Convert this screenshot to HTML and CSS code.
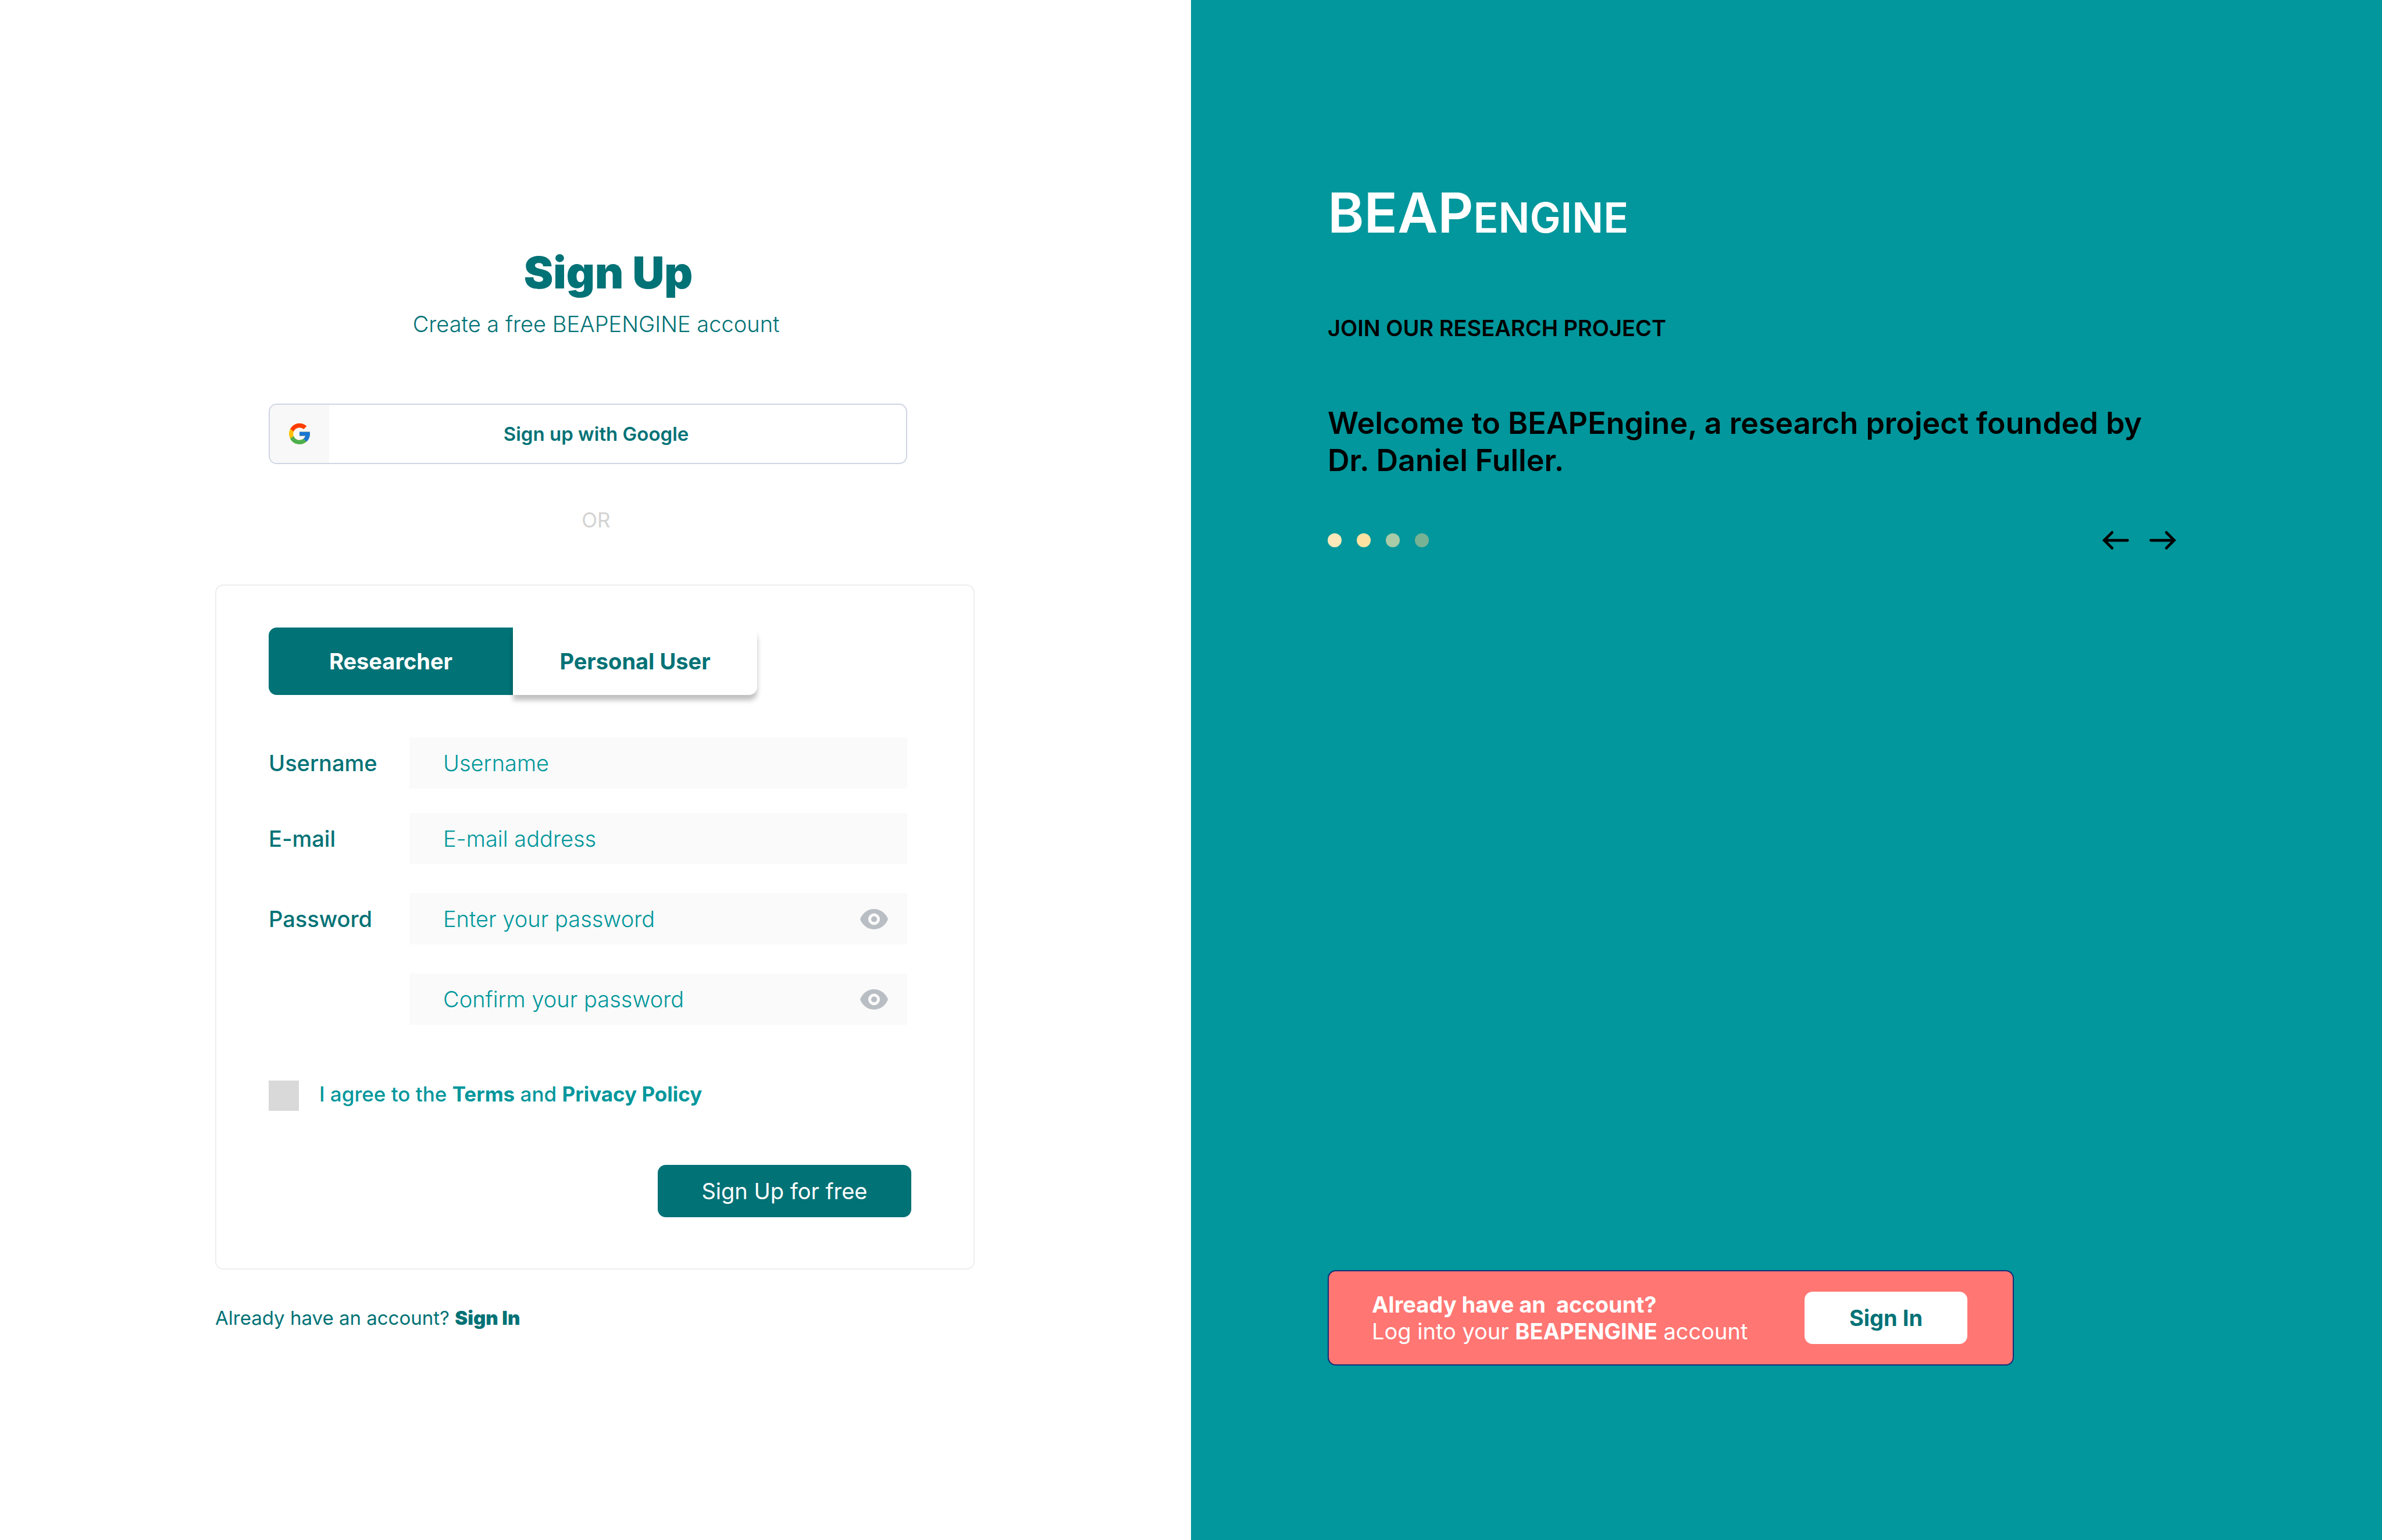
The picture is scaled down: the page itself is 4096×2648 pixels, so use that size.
FILE: index.html
```html
<!DOCTYPE html>
<html lang="en">
<head>
<meta charset="utf-8">
<title>Sign Up - BEAPENGINE</title>
<link rel="stylesheet" href="styles.css">
</head>
<body>
<div class="page">
  <main class="signup">
    <header class="intro">
      <h1 class="title">Sign Up</h1>
      <p class="subtitle">Create a free BEAPENGINE account</p>
    </header>
    <button type="button" class="google">
      <span class="google-mark">
        <svg class="google-logo" viewBox="4 4 40 40" aria-hidden="true">
          <path fill="#FFC107" d="M43.611 20.083H42V20H24v8h11.303c-1.649 4.657-6.08 8-11.303 8-6.627 0-12-5.373-12-12s5.373-12 12-12c3.059 0 5.842 1.154 7.961 3.039l5.657-5.657C34.046 6.053 29.268 4 24 4 12.955 4 4 12.955 4 24s8.955 20 20 20 20-8.955 20-20c0-1.341-.138-2.65-.389-3.917z"/>
          <path fill="#FF3D00" d="M6.306 14.691l6.571 4.819C14.655 15.108 18.961 12 24 12c3.059 0 5.842 1.154 7.961 3.039l5.657-5.657C34.046 6.053 29.268 4 24 4 16.318 4 9.656 8.337 6.306 14.691z"/>
          <path fill="#4CAF50" d="M24 44c5.166 0 9.86-1.977 13.409-5.192l-6.19-5.238C29.211 35.091 26.715 36 24 36c-5.202 0-9.619-3.317-11.283-7.946l-6.522 5.025C9.505 39.556 16.227 44 24 44z"/>
          <path fill="#1976D2" d="M43.611 20.083H42V20H24v8h11.303c-.792 2.237-2.231 4.166-4.087 5.571l6.193 5.238C36.971 39.205 44 34 44 24c0-1.341-.138-2.65-.389-3.917z"/>
        </svg>
      </span>
      <span class="google-text">Sign up with Google</span>
    </button>
    <p class="or">OR</p>
    <form class="card">
      <div class="tabs">
        <button type="button" class="tab tab-active">Researcher</button>
        <button type="button" class="tab">Personal User</button>
      </div>
      <div class="fields">
        <div class="row">
          <label class="label" for="username">Username</label>
          <input class="input" id="username" type="text" placeholder="Username">
        </div>
        <div class="row">
          <label class="label" for="email">E-mail</label>
          <input class="input" id="email" type="email" placeholder="E-mail address">
        </div>
        <div class="row row-password">
          <label class="label" for="password">Password</label>
          <div class="secret">
            <input class="input" id="password" type="password" placeholder="Enter your password">
            <button type="button" class="reveal" aria-label="Show password">
              <svg class="eye" viewBox="1 4 22 16" aria-hidden="true"><path d="M12 4C7 4 2.730 7.310 1 12c1.730 4.690 6 8 11 8s9.270-3.310 11-8C21.270 7.310 17 4 12 4zM12 16.600a4.600 4.600 0 1 1 0-9.200 4.600 4.600 0 0 1 0 9.200zM12 9.700a2.300 2.300 0 1 0 0 4.600 2.300 2.300 0 0 0 0-4.600z"/></svg>
            </button>
          </div>
        </div>
        <div class="row row-password">
          <span class="label"></span>
          <div class="secret">
            <input class="input" type="password" placeholder="Confirm your password" aria-label="Confirm your password">
            <button type="button" class="reveal" aria-label="Show confirmed password">
              <svg class="eye" viewBox="1 4 22 16" aria-hidden="true"><path d="M12 4C7 4 2.730 7.310 1 12c1.730 4.690 6 8 11 8s9.270-3.310 11-8C21.270 7.310 17 4 12 4zM12 16.600a4.600 4.600 0 1 1 0-9.200 4.600 4.600 0 0 1 0 9.200zM12 9.700a2.300 2.300 0 1 0 0 4.600 2.300 2.300 0 0 0 0-4.600z"/></svg>
            </button>
          </div>
        </div>
      </div>
      <div class="agree">
        <input class="tick" id="agree" type="checkbox">
        <label for="agree">I agree to the <a href="#terms">Terms</a> and <a href="#privacy">Privacy Policy</a></label>
      </div>
      <button type="submit" class="submit">Sign Up for free</button>
    </form>
    <p class="existing">Already have an account? <a href="#signin">Sign In</a></p>
  </main>
  <aside class="about">
    <div class="brand">BEAP<span class="brand-small">ENGINE</span></div>
    <h2 class="kicker">JOIN OUR RESEARCH PROJECT</h2>
    <p class="welcome">Welcome to BEAPEngine, a research project founded by Dr. Daniel Fuller.</p>
    <div class="carousel">
      <div class="dots">
        <span class="dot dot-1"></span>
        <span class="dot dot-2"></span>
        <span class="dot dot-3"></span>
        <span class="dot dot-4"></span>
      </div>
      <div class="arrows">
        <button type="button" class="arrow" aria-label="Previous">
          <svg viewBox="0 0 46 34" aria-hidden="true"><path d="M43.500 17H4M16.800 3.600L3.400 17l13.400 13.400"/></svg>
        </button>
        <button type="button" class="arrow" aria-label="Next">
          <svg viewBox="0 0 46 34" aria-hidden="true"><path d="M2.500 17H42M29.200 3.600L42.600 17 29.200 30.400"/></svg>
        </button>
      </div>
    </div>
    <section class="login">
      <div class="login-text">
        <p class="login-title">Already have an&nbsp; account?</p>
        <p>Log into your <strong>BEAPENGINE</strong> account</p>
      </div>
      <button type="button" class="signin">Sign In</button>
    </section>
  </aside>
</div>
</body>
</html>
```

FILE: styles.css
```css
:root {
  --teal: #01979c;
  --teal-dark: #017276;
  --radius: 14px;
}

* {
  box-sizing: border-box;
}

body,
h1,
h2,
p {
  margin: 0;
}

body {
  font-family: Inter, "Liberation Sans", sans-serif;
  font-size: 38px;
  line-height: 46px;
  color: var(--teal-dark);
  background: #fff;
}

button,
input {
  margin: 0;
  padding: 0;
  border: 0;
  font: inherit;
  color: inherit;
}

a {
  color: inherit;
  font-weight: 700;
  text-decoration: none;
}

.page {
  display: grid;
  grid-template-columns: 1fr 1fr;
  min-height: 100vh;
}

/* Sign-up form */

.signup {
  display: flex;
  flex-direction: column;
  padding: 420px 372px 64px 370px;
}

.intro {
  text-align: center;
}

.title {
  padding-left: 46px;
  font-size: 76px;
  line-height: 96px;
  font-weight: 900;
}

.subtitle {
  margin-top: 18px;
  padding-left: 4px;
  font-weight: 300;
}

.google {
  display: flex;
  height: 104px;
  margin: 114px 116px 0 92px;
  overflow: hidden;
  border: 2px solid #d0d5e4;
  border-radius: var(--radius);
  background: #fff;
  font-size: 33px;
  font-weight: 600;
}

.google-mark {
  display: grid;
  place-items: center;
  width: 102px;
  height: 100%;
  background: #f8f8f8;
}

.google-logo {
  width: 36px;
  height: 36px;
}

.google-text {
  flex: 1;
  align-self: center;
  padding-right: 74px;
}

.or {
  margin-top: 73px;
  padding-left: 4px;
  font-size: 35px;
  font-weight: 400;
  text-align: center;
  color: #d3d3d3;
}

.card {
  display: flex;
  flex-direction: column;
  margin-top: 88px;
  padding: 72px 114px 88px 90px;
  border: 2px solid #eee;
  border-radius: var(--radius);
}

.tabs {
  display: grid;
  grid-template-columns: 420px 420px;
}

.tab {
  height: 116px;
  border-radius: 0 var(--radius) var(--radius) 0;
  background: #fff;
  font-weight: 700;
  box-shadow: 0 9px 9px rgba(0, 0, 0, 0.25);
}

.tab-active {
  border-radius: var(--radius) 0 0 var(--radius);
  background: var(--teal-dark);
  color: #fff;
  box-shadow: none;
}

.fields {
  display: grid;
  gap: 42px;
  margin-top: 73px;
}

.row {
  display: grid;
  grid-template-columns: 242px 1fr;
  align-items: center;
}

.row-password {
  margin-top: 8px;
}

.label {
  font-weight: 500;
}

.input {
  width: 100%;
  height: 88px;
  padding: 0 58px;
  background: #fafafa;
  font-weight: 300;
}

.input::placeholder {
  color: var(--teal);
  opacity: 1;
}

.secret {
  position: relative;
}

.reveal {
  position: absolute;
  top: 0;
  right: 33px;
  display: grid;
  place-items: center;
  width: 48px;
  height: 88px;
  background: none;
}

.eye {
  width: 48px;
  height: 35px;
  fill: #b9bec5;
}

.agree {
  display: flex;
  gap: 35px;
  margin-top: 96px;
  font-size: 35px;
  font-weight: 500;
  color: var(--teal);
}

.tick {
  width: 52px;
  height: 52px;
  appearance: none;
  background: #d9d9d9;
}

.submit {
  align-self: flex-end;
  width: 436px;
  height: 90px;
  margin: 93px -7px 0 0;
  border-radius: var(--radius);
  background: var(--teal-dark);
  color: #fff;
}

.existing {
  margin-top: 60px;
  font-size: 33px;
  font-weight: 400;
}

.existing a {
  font-weight: 900;
}

/* Project panel */

.about {
  display: flex;
  flex-direction: column;
  padding: 308px 354px 300px 235px;
  background: var(--teal);
  color: #000;
}

.brand {
  font-size: 95px;
  line-height: 116px;
  font-weight: 600;
  color: #fff;
}

.brand-small {
  font-size: 71px;
  line-height: 1;
}

.kicker {
  margin-top: 117px;
  font-size: 38px;
  font-weight: 600;
}

.welcome {
  margin-top: 109px;
  font-size: 52px;
  line-height: 64px;
  font-weight: 600;
}

.carousel {
  display: flex;
  justify-content: space-between;
  align-items: center;
  margin-top: 88px;
}

.dots {
  display: flex;
  gap: 26px;
}

.dot {
  width: 24px;
  height: 24px;
  border-radius: 50%;
}

.dot-1 { background: #ffe8b9; }
.dot-2 { background: #ffe2a2; }
.dot-3 { background: #a9cba7; }
.dot-4 { background: #78b294; }

.arrows {
  display: flex;
  gap: 35px;
}

.arrow {
  display: flex;
  background: none;
}

.arrow svg {
  width: 46px;
  height: 34px;
  fill: none;
  stroke: #000;
  stroke-width: 4.75;
  stroke-linecap: round;
  stroke-linejoin: miter;
}

.login {
  display: flex;
  justify-content: space-between;
  align-items: center;
  width: 1180px;
  height: 164px;
  margin-top: auto;
  padding: 0 78px 0 74px;
  border: 2px solid #142d77;
  border-radius: var(--radius);
  background: #ff7673;
  color: #fff;
}

.login-title {
  font-weight: 700;
}

.signin {
  width: 280px;
  height: 90px;
  border-radius: var(--radius);
  background: #fff;
  color: var(--teal-dark);
  font-weight: 700;
}
```
